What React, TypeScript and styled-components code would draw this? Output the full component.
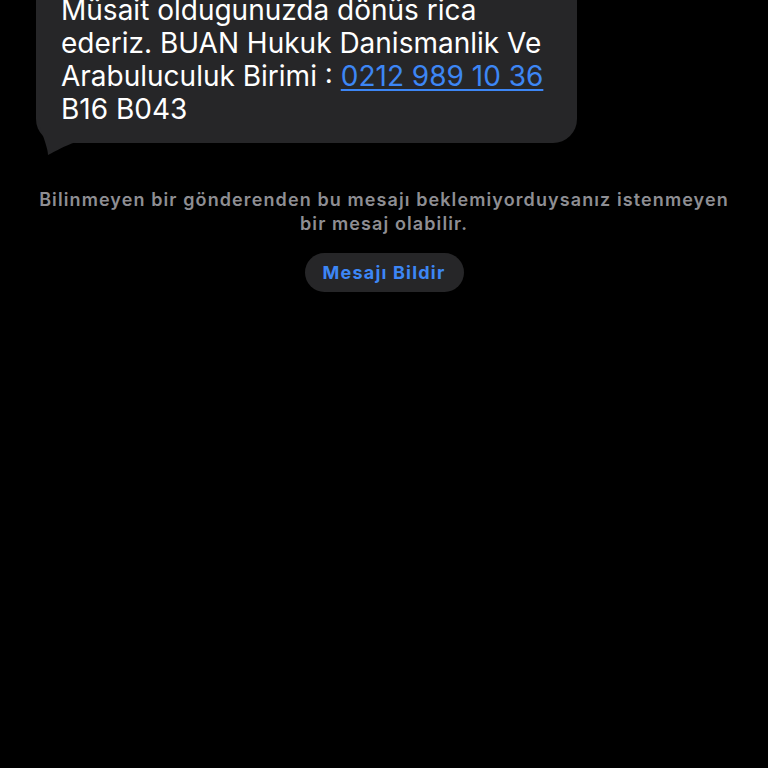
import styled, { createGlobalStyle } from "styled-components";

const GlobalStyle = createGlobalStyle`
  html, body {
    margin: 0;
    padding: 0;
    background: #000000;
  }
  body {
    font-family: Inter, "Noto Sans", sans-serif;
    -webkit-font-smoothing: antialiased;
  }
`

const Screen = styled.div`
  width: 768px;
  height: 768px;
  overflow: hidden;
  background: #000000;
  display: flex;
  flex-direction: column;
  align-items: center;
`

const Thread = styled.div`
  align-self: stretch;
  padding: 0 191px 0 36px;
`

const Bubble = styled.div`
  position: relative;
  margin-top: -16px;
  background: #262628;
  border-radius: 0 0 24px 24px;
  padding: 10px 10px 17px 25px;
  font-size: 28px;
  line-height: 33px;
  color: #ffffff;
  white-space: nowrap;
`

const Tail = styled.svg`
  position: absolute;
  left: 4px;
  bottom: -14px;
  width: 40px;
  height: 30px;
`

const PhoneLink = styled.a`
  color: #3d86f5;
  text-decoration: underline;
  text-decoration-thickness: 2px;
  text-underline-offset: 3px;
`

const Notice = styled.p`
  margin: 45px 0 0;
  text-align: center;
  font-size: 18px;
  line-height: 24px;
  font-weight: 600;
  color: #8e8e93;
  letter-spacing: 1.1px;
  white-space: nowrap;
`

const ReportButton = styled.button`
  margin-top: 17px;
  width: 159px;
  height: 39px;
  border: none;
  border-radius: 20px;
  background: #262628;
  color: #3d86f5;
  font-family: Inter, "Noto Sans", sans-serif;
  font-size: 18px;
  font-weight: 700;
  letter-spacing: 1.2px;
  cursor: pointer;
`

export default function App() {
  return (
    <>
      <GlobalStyle/>
      <Screen>
        <Thread>
          <Bubble>
            Müsait oldugunuzda dönüs rica
            <br/>
            ederiz. BUAN Hukuk Danismanlik Ve
            <br/>
            Arabuluculuk Birimi : <PhoneLink href="#">0212 989 10 36</PhoneLink>
            <br/>
            B16 B043
            <Tail viewBox="0 0 40 30">
              <path d="M0 0 C 4 12, 8 22, 8 28 C 16 24, 24 19, 36 15 L 36 0 Z" fill="#262628"/>
            </Tail>
          </Bubble>
        </Thread>
        <Notice>
          Bilinmeyen bir gönderenden bu mesajı beklemiyorduysanız istenmeyen
          <br/>
          bir mesaj olabilir.
        </Notice>
        <ReportButton>Mesajı Bildir</ReportButton>
      </Screen>
    </>
  )
}
